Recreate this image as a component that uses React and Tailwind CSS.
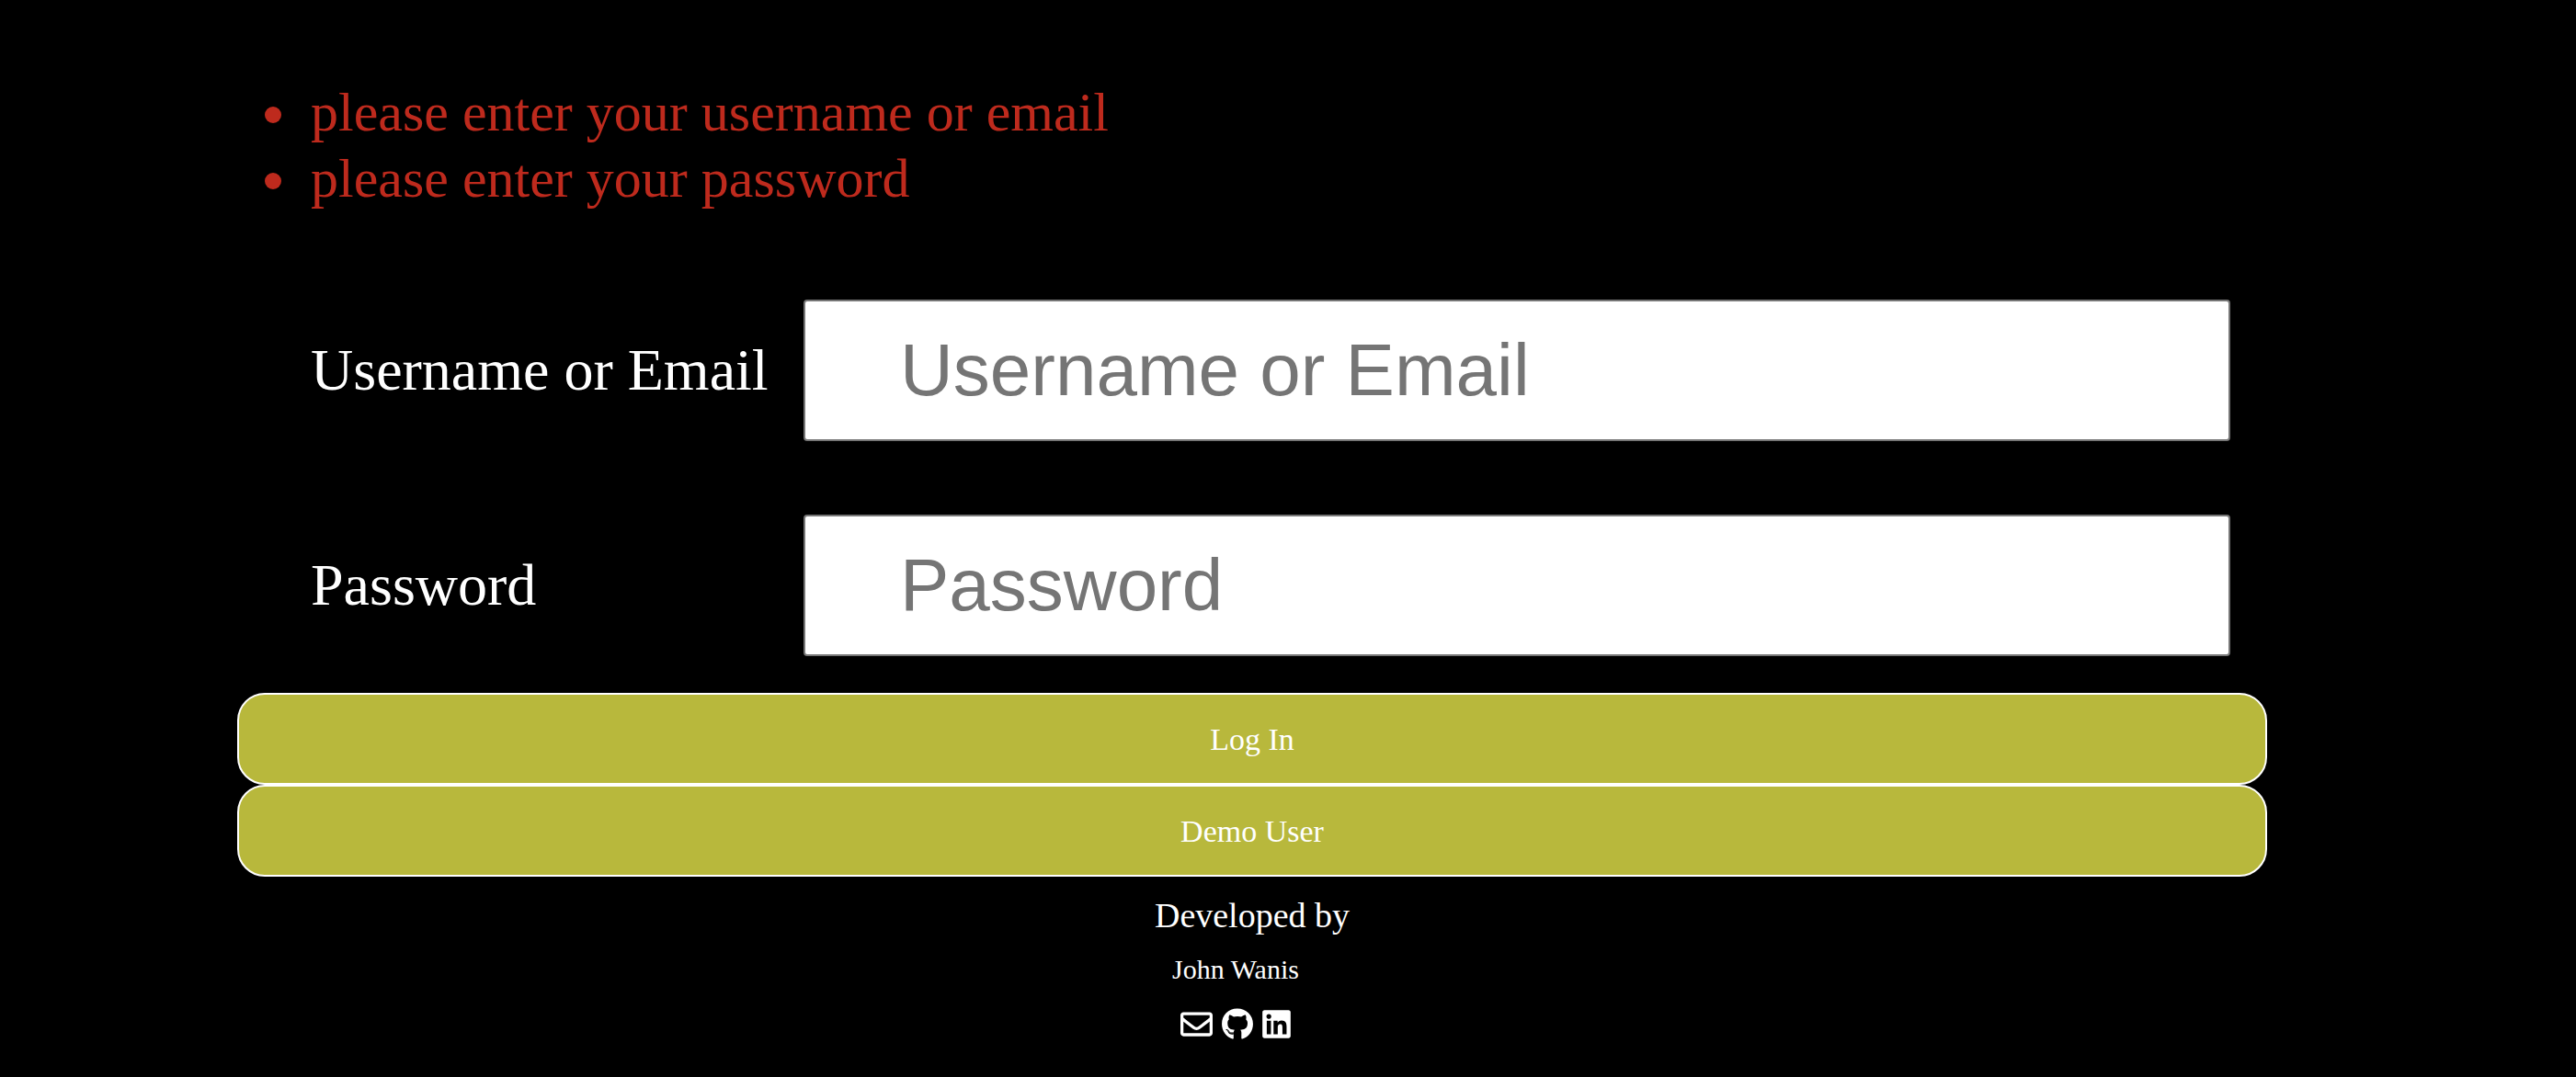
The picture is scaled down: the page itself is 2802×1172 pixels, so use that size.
import { FaGithub, FaLinkedin, FaRegEnvelope } from "react-icons/fa";

const errors = [
  "please enter your username or email",
  "please enter your password",
];

const fields = [
  { id: "credential", label: "Username or Email", type: "text" },
  { id: "password", label: "Password", type: "password" },
];

const links = [
  { name: "Email", href: "#email", Icon: FaRegEnvelope, width: "w-[35px]" },
  { name: "GitHub", href: "#github", Icon: FaGithub, width: "w-[34px]" },
  { name: "LinkedIn", href: "#linkedin", Icon: FaLinkedin, width: "w-[31px]" },
];

function Field({ id, label, type }) {
  return (
    <div className="grid grid-cols-[536px_1fr] items-center pl-20 pr-10">
      <label htmlFor={id} className="text-[64px] leading-[72px]">
        {label}
      </label>
      <input
        id={id}
        type={type}
        placeholder={label}
        className="h-[154px] w-full rounded-[4px] border-2 border-[#767676] bg-white px-[103px] font-['Liberation_Sans',Arial,sans-serif] text-[80px] text-black placeholder:text-[#757575]"
      />
    </div>
  );
}

function FormButton({ type, children }) {
  return (
    <button
      type={type}
      className="h-[100px] w-full rounded-[30px] border-2 border-white bg-[#b8b83c] text-[34px] text-white"
    >
      {children}
    </button>
  );
}

export default function App() {
  return (
    <div className="min-h-screen bg-black pl-[258px] pr-[336px] pt-[86px] font-['Liberation_Serif','Times_New_Roman',serif] text-white">
      <form onSubmit={(event) => event.preventDefault()}>
        <ul className="pl-[30px] text-[60px] leading-[72px] text-[#be2a1d]">
          {errors.map((error) => (
            <li
              key={error}
              className="flex gap-8 before:mt-[30px] before:size-[18px] before:shrink-0 before:rounded-full before:bg-[#be2a1d] before:content-['']"
            >
              {error}
            </li>
          ))}
        </ul>
        <div className="flex flex-col gap-20 pb-10 pt-24">
          {fields.map((field) => (
            <Field key={field.id} {...field} />
          ))}
        </div>
        <FormButton type="submit">Log In</FormButton>
        <FormButton type="button">Demo User</FormButton>
      </form>
      <footer className="pt-3 text-center">
        <p className="text-[38px] leading-[60px]">Developed by</p>
        <div className="pr-9">
          <p className="text-[30px] leading-[58px]">John Wanis</p>
          <div className="flex h-[60px] items-center justify-center gap-2.5">
            {links.map(({ name, href, Icon, width }) => (
              <a key={name} href={href} aria-label={name}>
                <Icon className={`h-[35px] ${width}`} />
              </a>
            ))}
          </div>
        </div>
      </footer>
    </div>
  );
}
